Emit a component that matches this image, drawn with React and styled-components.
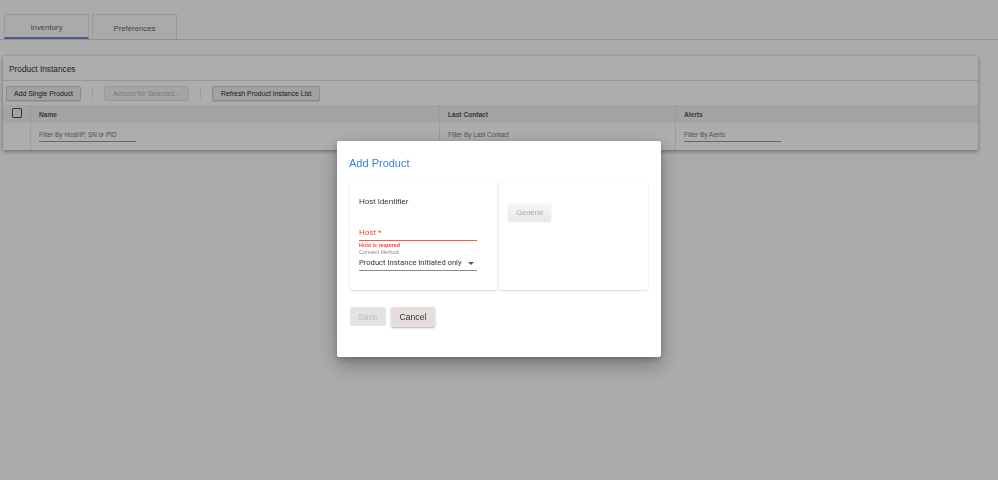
import React from "react"
import styled, { createGlobalStyle } from "styled-components"

const GlobalStyle = createGlobalStyle`
  html, body {
    margin: 0;
    background: #fcfcfc;
    font-family: "Liberation Sans", Arial, sans-serif;
    color: #333;
  }
`

const Page = styled.div`
  width: 998px;
  height: 480px;
  overflow: hidden;
`

const TabBar = styled.div`
  display: flex;
  gap: 3px;
  padding: 14px 0 0 4px;
  border-bottom: 1px solid #d8d8d8;
`

const Tab = styled.div`
  width: 85px;
  height: 25px;
  box-sizing: border-box;
  padding-top: 2px;
  border: 1px solid #e2e2e2;
  border-bottom: ${p => (p.active ? "2px solid #7484d4" : "none")};
  background: #fbfbfb;
  display: flex;
  align-items: center;
  justify-content: center;
  font-size: 7.8px;
  color: #666;
`

const Card = styled.div`
  margin: 16px 20px 0 3px;
  background: #fff;
  box-shadow: 0 2px 4px rgba(0, 0, 0, 0.3), 0 0 2px rgba(0, 0, 0, 0.15);
`

const CardTitle = styled.div`
  height: 25px;
  padding: 2px 0 0 6px;
  box-sizing: border-box;
  display: flex;
  align-items: center;
  font-size: 8.3px;
  color: #333;
  border-bottom: 1px solid #e0e0e0;
`

const Toolbar = styled.div`
  height: 24px;
  padding-left: 3px;
  display: flex;
  align-items: center;
  gap: 11px;
`

const ToolButton = styled.div`
  height: 15px;
  padding: 0 ${p => p.pad || 7}px;
  box-sizing: border-box;
  border: 1px solid ${p => (p.disabled ? "#e2e2e2" : "#cfcfcf")};
  border-radius: 2px;
  background: ${p => (p.disabled ? "#f4f4f4" : "#efefef")};
  color: ${p => (p.disabled ? "#b5b5b5" : "#2a2a2a")};
  font-size: 6.9px;
  display: flex;
  align-items: center;
  box-shadow: ${p => (p.disabled ? "none" : "0 1px 1px rgba(0,0,0,0.12)")};
`

const Divider = styled.span`
  width: 1px;
  height: 10px;
  background: #e2e2e2;
`

const Row = styled.div`
  display: grid;
  grid-template-columns: 27px 409px 236px 1fr;
  height: ${p => p.h}px;
  background: ${p => p.bg || "transparent"};
`

const Cell = styled.div`
  display: flex;
  align-items: ${p => (p.filter ? "flex-end" : "center")};
  justify-content: ${p => (p.center ? "center" : "flex-start")};
  padding-left: ${p => (p.center ? 0 : 8)}px;
  padding-bottom: ${p => (p.filter ? 8 : 0)}px;
  border-left: ${p => (p.first ? "none" : "1px solid #e6e6e6")};
  font-size: 6.6px;
  font-weight: ${p => (p.bold ? 600 : 400)};
  color: ${p => (p.bold ? "#555" : "#777")};
`

const Checkbox = styled.div`
  width: 8px;
  height: 8px;
  border: 1px solid #555;
  border-radius: 1px;
  margin-top: -3px;
`

const FilterInput = styled.div`
  width: 97px;
  padding-bottom: 3px;
  border-bottom: 1px solid #9a9a9a;
  font-size: 6.4px;
  color: #777;
`

const Overlay = styled.div`
  position: fixed;
  inset: 0;
  background: rgba(0, 0, 0, 0.32);
  display: flex;
  justify-content: center;
  align-items: flex-start;
  padding-top: 141px;
`

const Dialog = styled.div`
  width: 324px;
  height: 216px;
  box-sizing: border-box;
  padding: 15px 12px 0;
  background: #fff;
  border-radius: 2px;
  box-shadow: 0 8px 20px rgba(0, 0, 0, 0.3), 0 2px 6px rgba(0, 0, 0, 0.2);
`

const DialogTitle = styled.div`
  font-size: 11px;
  line-height: 14px;
  color: #3b7fd8;
`

const Panels = styled.div`
  margin-top: 12px;
  display: grid;
  grid-template-columns: 147px 149px;
  gap: 2px;
  padding-left: 1px;
  height: 108px;
`

const Panel = styled.div`
  background: #fff;
  padding: 15px 9px 0;
  box-shadow: 0 1px 2px rgba(0, 0, 0, 0.14), 0 0 1px rgba(0, 0, 0, 0.1);
  border-radius: 2px;
`

const SectionLabel = styled.div`
  font-size: 8px;
  line-height: 10px;
  color: #333;
`

const HostField = styled.div`
  margin-top: 21px;
  width: 118px;
  padding-bottom: 2px;
  border-bottom: 1px solid #f25b50;
  font-family: Roboto, "Liberation Sans", sans-serif;
  font-size: 8px;
  line-height: 10px;
  color: #f44336;
`

const HelperText = styled.div`
  font-size: 5.4px;
  line-height: 7px;
  color: ${p => p.color};
  font-weight: ${p => (p.bold ? 600 : 400)};
  margin-top: ${p => p.mt || 0}px;
`

const Select = styled.div`
  width: 118px;
  display: flex;
  align-items: center;
  justify-content: space-between;
  padding: 2px 0 2px;
  border-bottom: 1px solid #8a8a8a;
  font-family: Roboto, "Liberation Sans", sans-serif;
  font-size: 7.6px;
  line-height: 10px;
  color: #333;
`

const Caret = styled.span`
  width: 0;
  height: 0;
  margin-right: 3px;
  border-left: 3px solid transparent;
  border-right: 3px solid transparent;
  border-top: 3px solid #555;
`

const SoftButton = styled.div`
  display: inline-flex;
  align-items: center;
  justify-content: center;
  height: 18px;
  width: 43px;
  margin-top: 6px;
  border-radius: 2px;
  background: linear-gradient(#f7f7f7, #e9e9e9);
  box-shadow: 0 1px 2px rgba(0, 0, 0, 0.12);
  font-size: 7.5px;
  color: #aaa;
`

const Actions = styled.div`
  margin-top: 17px;
  display: flex;
  gap: 5px;
  padding-left: 1px;
`

const ActionButton = styled.div`
  height: ${p => (p.primary ? 20 : 19)}px;
  padding: 0 ${p => (p.primary ? 9 : 8)}px;
  display: flex;
  align-items: center;
  border-radius: 2px;
  font-size: 8.6px;
  background: ${p => (p.primary ? "#e8dddd" : "#e3e3e3")};
  color: ${p => (p.primary ? "#333" : "#bdbdbd")};
  box-shadow: ${p => (p.primary ? "0 1px 2px rgba(0,0,0,0.3)" : "none")};
`

export default function App() {
  return (
    <Page>
      <GlobalStyle />
      <TabBar>
        <Tab active>Inventory</Tab>
        <Tab>Preferences</Tab>
      </TabBar>
      <Card>
        <CardTitle>Product Instances</CardTitle>
        <Toolbar>
          <ToolButton>Add Single Product</ToolButton>
          <Divider />
          <ToolButton disabled pad={8}>Actions for Selected...</ToolButton>
          <Divider />
          <ToolButton pad={8}>Refresh Product Instance List</ToolButton>
        </Toolbar>
        <Row h={18} bg="#f0f0f0">
          <Cell first center><Checkbox /></Cell>
          <Cell bold>Name</Cell>
          <Cell bold>Last Contact</Cell>
          <Cell bold>Alerts</Cell>
        </Row>
        <Row h={27}>
          <Cell first center />
          <Cell filter><FilterInput>Filter By Host/IP, SN or PID</FilterInput></Cell>
          <Cell filter><FilterInput>Filter By Last Contact</FilterInput></Cell>
          <Cell filter><FilterInput>Filter By Alerts</FilterInput></Cell>
        </Row>
      </Card>
      <Overlay>
        <Dialog>
          <DialogTitle>Add Product</DialogTitle>
          <Panels>
            <Panel>
              <SectionLabel>Host Identifier</SectionLabel>
              <HostField>Host *</HostField>
              <HelperText color="#f44336" bold mt={1}>Host is required</HelperText>
              <HelperText color="#888">Connect Method</HelperText>
              <Select>
                Product Instance Initiated only
                <Caret />
              </Select>
            </Panel>
            <Panel>
              <SoftButton>General</SoftButton>
            </Panel>
          </Panels>
          <Actions>
            <ActionButton>Save</ActionButton>
            <ActionButton primary>Cancel</ActionButton>
          </Actions>
        </Dialog>
      </Overlay>
    </Page>
  )
}
